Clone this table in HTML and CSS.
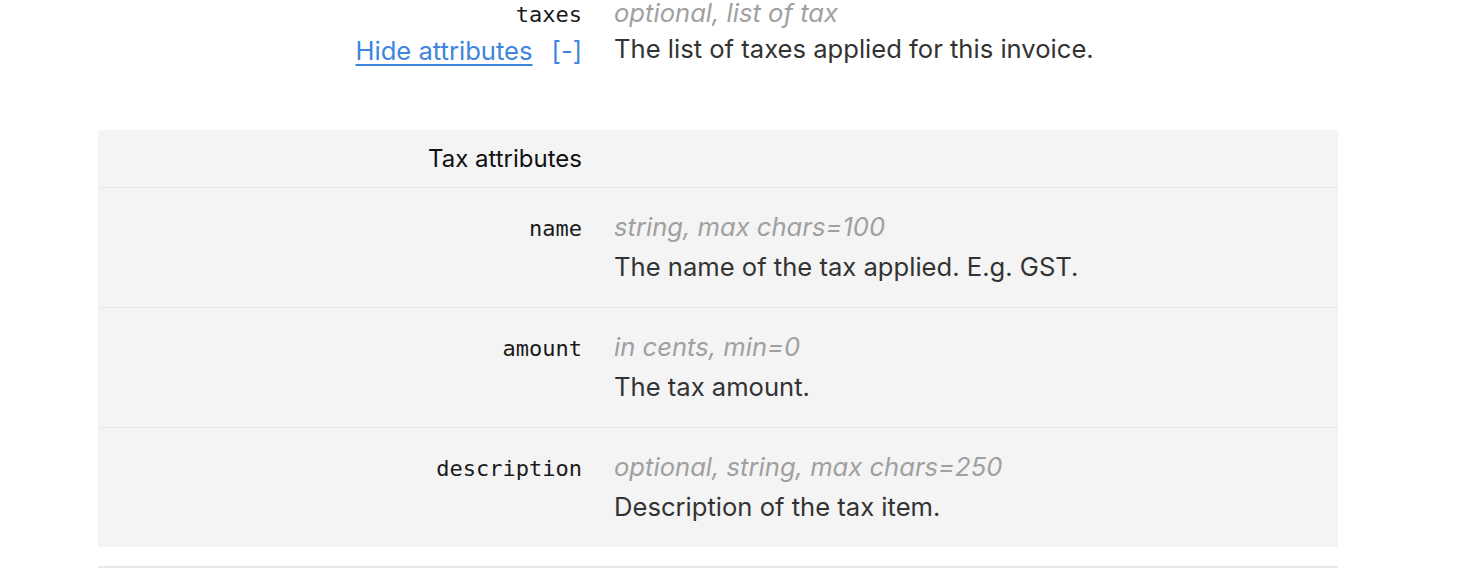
FILE: index.html
```html
<!DOCTYPE html>
<html>
<head>
<meta charset="utf-8">
<link rel="stylesheet" href="styles.css">
</head>
<body>
<div class="page">
  <div class="attr top">
    <div class="label">
      <div class="first"><code class="name">taxes</code></div>
      <div class="toggle second"><a href="#" class="link">Hide attributes</a><span class="bracket">[-]</span></div>
    </div>
    <div class="info">
      <div class="type first">optional, list of tax</div>
      <div class="desc second">The list of taxes applied for this invoice.</div>
    </div>
  </div>

  <div class="sub">
    <div class="sub-head">
      <div class="label">Tax attributes</div>
    </div>
    <div class="attr row">
      <div class="label"><code class="name">name</code></div>
      <div class="info">
        <div class="type">string, max chars=100</div>
        <div class="desc">The name of the tax applied. E.g. GST.</div>
      </div>
    </div>
    <div class="attr row">
      <div class="label"><code class="name">amount</code></div>
      <div class="info">
        <div class="type">in cents, min=0</div>
        <div class="desc">The tax amount.</div>
      </div>
    </div>
    <div class="attr row">
      <div class="label"><code class="name">description</code></div>
      <div class="info">
        <div class="type">optional, string, max chars=250</div>
        <div class="desc">Description of the tax item.</div>
      </div>
    </div>
  </div>
  <div class="rule"></div>
</div>
</body>
</html>
```
FILE: styles.css
```css
html, body {
  margin: 0;
  padding: 0;
  background: #fff;
}
body {
  font-family: Inter, "Noto Sans", sans-serif;
  font-size: 25.6px;
  color: #333;
}
.page {
  width: 1240px;
  margin: 0 0 0 98px;
}
.attr {
  display: flex;
  gap: 32px;
  line-height: 40px;
}
.label {
  width: 484px;
  flex: none;
  text-align: right;
}
.info {
  flex: 1;
}
.name {
  font-family: "DejaVu Sans Mono", monospace;
  font-size: 22px;
  color: #1a1a1a;
}
.type {
  font-style: italic;
  color: #a0a0a0;
}
.toggle {
  display: flex;
  justify-content: flex-end;
  gap: 19px;
}
.link {
  color: #3d85de;
  text-decoration: underline;
  text-underline-offset: 4px;
}
.bracket {
  color: #3d85de;
}
.top {
  padding-bottom: 56px;
}
.top .first {
  line-height: 25px;
}
.top .second {
  line-height: 47px;
}
.sub {
  background: #f4f4f4;
}
.sub-head {
  display: flex;
  line-height: 40px;
  padding: 9px 0 8px;
  color: #111;
  font-size: 24px;
}
.row {
  border-top: 1px solid #e8e8e8;
  padding: 19px 0 20px;
}
.rule {
  margin-top: 19px;
  border-top: 2px solid #e8e8e8;
}
```
